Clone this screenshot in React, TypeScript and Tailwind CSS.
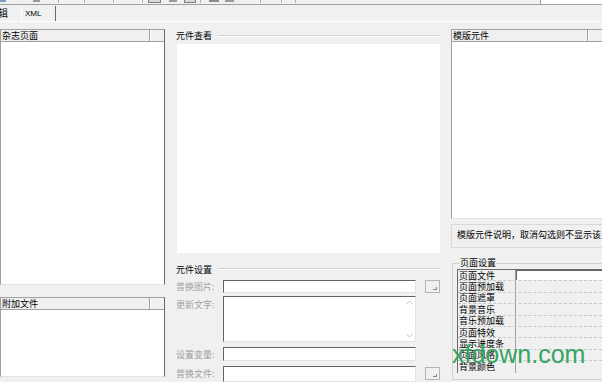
import React from 'react';

const cjk = { fontFamily: '"Noto Sans CJK SC", "Noto Sans", sans-serif' };

// sunken list with a two column header
function ListBox({ title, className }: { title: string; className: string }) {
  return (
    <div className={`bg-white border-t border-l border-[#a0a0a0] border-r border-r-[#696969] border-b border-b-[#e3e3e3] flex flex-col ${className}`}>
      <div className="h-[12px] flex bg-[#f0f0f0] border-b border-[#a0a0a0] shrink-0">
        <div className="flex-1 border-r border-[#a0a0a0] pl-[1px] flex items-center text-black">{title}</div>
        <div className="w-[14px] border-l border-white" />
      </div>
      <div className="flex-1" />
    </div>
  );
}

function Edit({ className }: { className: string }) {
  return (
    <div className={`bg-white border-t border-l border-[#646464] border-r border-b border-r-[#e3e3e3] border-b-[#e3e3e3] ${className}`} />
  );
}

function Browse() {
  return (
    <div className="w-[15px] h-[13px] border border-[#b5b5b5] bg-[#f0f0f0] relative">
      <div className="absolute right-[2px] bottom-[2px] w-[4px] h-[3px] border-r border-b border-[#8a8a8a]" />
    </div>
  );
}

function GroupTitle({ text }: { text: string }) {
  return (
    <div className="flex items-center h-[12px]">
      <span className="text-black pr-[6px]">{text}</span>
      <div className="flex-1 border-t border-[#d0d0d0] border-b border-b-white" />
    </div>
  );
}

const pageRows = ['页面文件', '页面预加载', '页面遮罩', '背景音乐', '音乐预加载', '页面特效', '显示进度条', '页面风格', '背景颜色'];

export default function App() {
  return (
    <div className="w-[602px] h-[382px] bg-[#f0f0f0] relative overflow-hidden text-[9px] leading-none" style={cjk}>
      {/* toolbar remnant */}
      <div className="flex h-[5px]">
        <div className="flex-1 border-b border-[#a0a0a0] flex items-start">
          <div className="w-[6px] h-[2px] bg-[#7f9ac4]" />
          <div className="ml-[27px] w-[7px] h-[2px] bg-[#9a9a9a]" />
          <div className="ml-[18px] w-[1px] h-[3px] bg-[#b0b0b0]" />
          <div className="ml-[25px] w-[1px] h-[3px] bg-[#b0b0b0]" />
          <div className="ml-[28px] w-[1px] h-[3px] bg-[#b0b0b0]" />
          <div className="ml-[28px] w-[1px] h-[3px] bg-[#b0b0b0]" />
          <div className="ml-[5px] w-[13px] h-[3px] border-b border-x border-[#808080] bg-[#d8d8d8]" />
          <div className="ml-[8px] w-[8px] h-[2px] bg-[#9a9a9a]" />
          <div className="ml-[7px] w-[12px] h-[3px] border-b border-x border-[#808080] bg-[#d8d8d8]" />
          <div className="ml-[4px] w-[1px] h-[3px] bg-[#b0b0b0]" />
          <div className="ml-[8px] w-[10px] h-[2px] bg-[#8a8a8a]" />
          <div className="ml-[6px] w-[9px] h-[2px] bg-[#9a9a9a]" />
          <div className="ml-[26px] w-[1px] h-[3px] bg-[#b0b0b0]" />
          <div className="ml-[20px] w-[1px] h-[3px] bg-[#b0b0b0]" />
          <div className="ml-[13px] w-[1px] h-[3px] bg-[#b0b0b0]" />
        </div>
        <div className="w-[62px] bg-white border-l border-b border-[#a0a0a0]" />
      </div>

      {/* tabs */}
      <div className="flex h-[16px] items-end">
        <div className="w-[23px] h-[16px] flex items-center text-black text-[10px] -ml-[2px]">辑</div>
        <div className="w-[35px] h-[15px] border-l border-white border-r border-r-[#696969] flex items-center pl-[3px] text-[8px] text-[#000000]" style={{ fontFamily: '"Liberation Sans", sans-serif' }}>
          XML
        </div>
      </div>

      <div className="border-t border-white flex pt-[7px] h-[361px]">
        {/* left column */}
        <div className="w-[165px] shrink-0 flex flex-col">
          <ListBox title="杂志页面" className="h-[256px]" />
          <ListBox title="附加文件" className="h-[80px] mt-[12px]" />
        </div>

        {/* middle column */}
        <div className="w-[264px] shrink-0 ml-[11px] flex flex-col pt-[1px]">
          <GroupTitle text="元件查看" />
          <div className="ml-[1px] mt-[2px] h-[210px] bg-white" />
          <div className="mt-[10px]">
            <GroupTitle text="元件设置" />
          </div>
          <div className="mt-[5px] flex items-start">
            <span className="w-[47px] shrink-0 pt-[2px] text-[#a0a0a0]">普换图片:</span>
            <Edit className="w-[193px] h-[13px]" />
            <div className="ml-[9px]"><Browse /></div>
          </div>
          <div className="mt-[3px] flex items-start">
            <span className="w-[47px] shrink-0 pt-[4px] text-[#a0a0a0]">更新文字:</span>
            <div className="w-[193px] h-[46px] bg-white border-t border-l border-[#646464] border-r border-b border-r-[#e3e3e3] border-b-[#e3e3e3] flex justify-end">
              <div className="w-[12px] flex flex-col justify-between items-center py-[3px]">
                <svg width="7" height="5" viewBox="0 0 7 5"><path d="M0.5 4 L3.5 1 L6.5 4" fill="none" stroke="#c0c0c0" /></svg>
                <svg width="7" height="5" viewBox="0 0 7 5"><path d="M0.5 1 L3.5 4 L6.5 1" fill="none" stroke="#c0c0c0" /></svg>
              </div>
            </div>
          </div>
          <div className="mt-[5px] flex items-start">
            <span className="w-[47px] shrink-0 pt-[3px] text-[#a0a0a0]">设置变量:</span>
            <Edit className="w-[193px] h-[14px]" />
          </div>
          <div className="mt-[5px] flex items-start">
            <span className="w-[47px] shrink-0 pt-[3px] text-[#a0a0a0]">普换文件:</span>
            <Edit className="w-[193px] h-[16px]" />
            <div className="ml-[9px] mt-[1px]"><Browse /></div>
          </div>
        </div>

        {/* right column */}
        <div className="flex-1 min-w-0 ml-[11px] flex flex-col">
          <ListBox title="模版元件" className="h-[190px] border-r-0" />
          <div className="mt-[5px] h-[24px] border border-[#d9d9d9] border-r-0 pl-[5px] pt-[5px] whitespace-nowrap overflow-hidden text-black">
            模版元件说明，取消勾选则不显示该元件
          </div>
          <fieldset className="mt-[10px] ml-[1px] h-[122px] min-w-0 border border-[#d0d0d0] border-r-0 pl-[4px] pr-0 pb-[4px]">
            <legend className="px-0 ml-[3px] text-black leading-[10px]">页面设置</legend>
            <div className="mt-[1px] border-t border-l border-[#696969]">
              {pageRows.map((r, i) => (
                <div key={r} className={`flex h-[11.4px] ${i < pageRows.length - 1 ? 'border-b border-dashed border-[#c8c8c8]' : ''}`}>
                  <div className="w-[58px] shrink-0 border-r border-[#a0a0a0] pl-[1px] flex items-center text-black">{r}</div>
                  <div className={`flex-1 ${i === 0 ? 'bg-white border-t border-l border-[#646464]' : ''}`} />
                </div>
              ))}
            </div>
          </fieldset>
        </div>
      </div>

      {/* watermark */}
      <div
        className="absolute left-[452px] top-[342px] text-[25px] leading-none text-[#34a563]"
        style={{ fontFamily: '"Liberation Sans", Arial, sans-serif' }}
      >
        xfdown.com
      </div>
    </div>
  );
}
